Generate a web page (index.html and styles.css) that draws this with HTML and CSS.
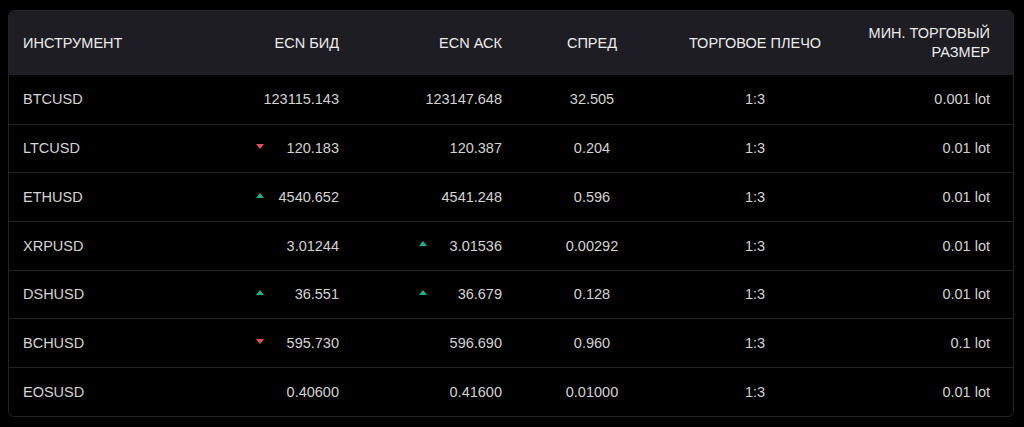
FILE: index.html
```html
<!DOCTYPE html>
<html lang="ru">
<head>
<meta charset="utf-8">
<link rel="stylesheet" href="styles.css">
</head>
<body>
<div class="table">
  <div class="row head">
    <div class="cell c1">ИНСТРУМЕНТ</div>
    <div class="cell c2">ECN БИД</div>
    <div class="cell c3">ECN АСК</div>
    <div class="cell c4">СПРЕД</div>
    <div class="cell c5">ТОРГОВОЕ ПЛЕЧО</div>
    <div class="cell c6">МИН. ТОРГОВЫЙ<br>РАЗМЕР</div>
  </div>
  <div class="row">
    <div class="cell c1">BTCUSD</div>
    <div class="cell c2"><span class="val">123115.143</span></div>
    <div class="cell c3"><span class="val">123147.648</span></div>
    <div class="cell c4">32.505</div>
    <div class="cell c5">1:3</div>
    <div class="cell c6">0.001 lot</div>
  </div>
  <div class="row">
    <div class="cell c1">LTCUSD</div>
    <div class="cell c2"><span class="tri down"></span><span class="val">120.183</span></div>
    <div class="cell c3"><span class="val">120.387</span></div>
    <div class="cell c4">0.204</div>
    <div class="cell c5">1:3</div>
    <div class="cell c6">0.01 lot</div>
  </div>
  <div class="row">
    <div class="cell c1">ETHUSD</div>
    <div class="cell c2"><span class="tri up"></span><span class="val">4540.652</span></div>
    <div class="cell c3"><span class="val">4541.248</span></div>
    <div class="cell c4">0.596</div>
    <div class="cell c5">1:3</div>
    <div class="cell c6">0.01 lot</div>
  </div>
  <div class="row">
    <div class="cell c1">XRPUSD</div>
    <div class="cell c2"><span class="val">3.01244</span></div>
    <div class="cell c3"><span class="tri up"></span><span class="val">3.01536</span></div>
    <div class="cell c4">0.00292</div>
    <div class="cell c5">1:3</div>
    <div class="cell c6">0.01 lot</div>
  </div>
  <div class="row">
    <div class="cell c1">DSHUSD</div>
    <div class="cell c2"><span class="tri up"></span><span class="val">36.551</span></div>
    <div class="cell c3"><span class="tri up"></span><span class="val">36.679</span></div>
    <div class="cell c4">0.128</div>
    <div class="cell c5">1:3</div>
    <div class="cell c6">0.01 lot</div>
  </div>
  <div class="row">
    <div class="cell c1">BCHUSD</div>
    <div class="cell c2"><span class="tri down"></span><span class="val">595.730</span></div>
    <div class="cell c3"><span class="val">596.690</span></div>
    <div class="cell c4">0.960</div>
    <div class="cell c5">1:3</div>
    <div class="cell c6">0.1 lot</div>
  </div>
  <div class="row">
    <div class="cell c1">EOSUSD</div>
    <div class="cell c2"><span class="val">0.40600</span></div>
    <div class="cell c3"><span class="val">0.41600</span></div>
    <div class="cell c4">0.01000</div>
    <div class="cell c5">1:3</div>
    <div class="cell c6">0.01 lot</div>
  </div>
</div>
</body>
</html>
```

FILE: styles.css
```css
html, body {
  margin: 0;
  padding: 0;
  background: #000;
}
body {
  padding: 10px 10px 0 8px;
  font-family: "Liberation Sans", Arial, sans-serif;
  font-size: 14.5px;
  color: #d4d4d4;
}
.table {
  width: 1006px;
  box-sizing: border-box;
  border: 1px solid #232326;
  border-radius: 6px;
  overflow: hidden;
}
.row {
  display: grid;
  grid-template-columns: 191px 154px 163px 150px 176px 170px;
  height: 48.67px;
  box-sizing: border-box;
  align-items: center;
}
.row + .row {
  border-top: 1px solid #232326;
}
.row.head {
  height: 64px;
  background: #1d1d23;
  color: #ececec;
  line-height: 19px;
}
.row.head + .row {
  border-top: none;
}
.cell {
  padding: 0 15px;
}
.c1 { text-align: left; padding-left: 14px; }
.c2, .c3 {
  display: flex;
  justify-content: flex-end;
  align-items: center;
}
.c4, .c5 { text-align: center; padding: 0; }
.c6 { text-align: right; padding-right: 23px; }
.head .c2, .head .c3 { display: block; text-align: right; }
.val {
  display: inline-block;
  min-width: 70px;
  text-align: right;
}
.tri {
  width: 0;
  height: 0;
  margin-right: 5px;
  border-left: 4.5px solid transparent;
  border-right: 4.5px solid transparent;
  position: relative;
  top: -2px;
}
.tri.down { border-top: 5px solid #e84a5f; }
.tri.up { border-bottom: 5px solid #1fb08a; }
```
